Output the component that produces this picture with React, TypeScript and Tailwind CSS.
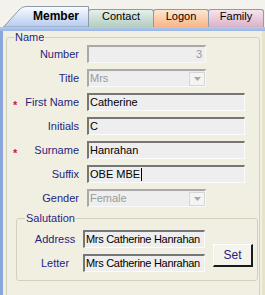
import React from "react";

const navy = "text-[#1f1f7e]";

function Arrow() {
  return (
    <div className="w-[16px] h-[14px] bg-[#f4f4f2] border border-[#d6d6d6] flex items-center justify-center">
      <svg width="7" height="4" viewBox="0 0 7 4">
        <path d="M0 0 L7 0 L3.5 4 Z" fill="#a8a8a8" />
      </svg>
    </div>
  );
}

function TextBox({ children, w = "w-[158px]" }: { children?: React.ReactNode; w?: string }) {
  return (
    <div
      className={`${w} h-[18px] bg-[#eeeeee] border-t-2 border-l-2 border-r border-b border-t-[#767676] border-l-[#767676] border-r-[#fbfbfb] border-b-[#fbfbfb] flex items-center pl-[1px] text-black whitespace-nowrap overflow-hidden`}
    >
      {children}
    </div>
  );
}

function DisabledBox({ children, combo, right }: { children?: React.ReactNode; combo?: boolean; right?: boolean }) {
  return (
    <div
      className={`w-[119px] h-[18px] bg-[#eeeeee] border-t-2 border-l-2 border-r border-b border-t-[#a9a9a9] border-l-[#a9a9a9] border-r-[#f9f9f9] border-b-[#f9f9f9] flex items-center text-[#9b9b9b] ${right ? "justify-end pr-[3px]" : "pl-[1px] justify-between"}`}
    >
      <span>{children}</span>
      {combo && <Arrow />}
    </div>
  );
}

function Row({ label, star, children }: { label: string; star?: boolean; children: React.ReactNode }) {
  return (
    <div className="flex items-center h-[18px] gap-[8px]">
      <div className={`w-[72px] flex items-center ${navy}`}>
        {star && <span className="ml-[6px] text-[#c8203c] text-[11px] font-bold leading-none mt-[6px]">*</span>}
        <span className="ml-auto whitespace-nowrap">{label}</span>
      </div>
      {children}
    </div>
  );
}

function Tab({ w, from, to, children }: { w: string; from: string; to: string; children: React.ReactNode }) {
  return (
    <div
      className={`${w} h-[18px] -ml-px border border-b-0 border-[#8f9aa6] rounded-t-[3px] bg-gradient-to-b ${from} ${to} flex justify-center items-start text-black`}
    >
      {children}
    </div>
  );
}

export default function App() {
  return (
    <div className="w-[265px] h-[295px] overflow-hidden bg-[#f3f2ec] text-[11px] leading-[13px] [font-family:'Liberation_Sans',Arial,sans-serif]">
      {/* Tabs */}
      <div className="h-[27px] flex items-end pl-[3px]">
        <div className="relative w-[86px] h-[21px] flex items-start pt-[3px] pl-[30px] font-bold text-[12px] leading-[14px] text-black">
          <svg className="absolute inset-0" width="86" height="21" viewBox="0 0 86 21">
            <defs>
              <linearGradient id="mt" x1="0" y1="0" x2="0" y2="1">
                <stop offset="0" stopColor="#fbfcfe" />
                <stop offset="1" stopColor="#b4cbef" />
              </linearGradient>
            </defs>
            <path d="M0.5 21 L16 4 Q19 0.5 23 0.5 L85.5 0.5 L85.5 21 Z" fill="url(#mt)" stroke="#8f9aa6" strokeWidth="1" />
          </svg>
          <span className="relative">Member</span>
        </div>
        <Tab w="w-[66px]" from="from-[#e6f0eb]" to="to-[#b3cdc1]">Contact</Tab>
        <Tab w="w-[56px]" from="from-[#fde6d2]" to="to-[#f6b586]">Logon</Tab>
        <Tab w="w-[56px]" from="from-[#f6e4ee]" to="to-[#d9b3c8]">Family</Tab>
      </div>
      <div className="h-[4px] bg-gradient-to-b from-[#b4cbef] to-[#9ab5e3]" />

      {/* Panel */}
      <div className="h-[264px] border-l-[3px] border-l-[#8aa6dc] border-r-[3px] border-r-[#e7e3c8] bg-[#f1efe2] pt-[6px] pl-[3px]">
        <div className="relative w-[254px] h-[270px] border border-[#d3d1bd] rounded-[3px] pt-[7px]">
          <span className="absolute -top-[7px] left-[7px] px-[1px] bg-[#f1efe2] text-[#2a1d86]">Name</span>
          <div className="flex flex-col gap-[6px]">
            <Row label="Number">
              <DisabledBox right>3</DisabledBox>
            </Row>
            <Row label="Title">
              <DisabledBox combo>Mrs</DisabledBox>
            </Row>
            <Row label="First Name" star>
              <TextBox>Catherine</TextBox>
            </Row>
            <Row label="Initials">
              <TextBox>C</TextBox>
            </Row>
            <Row label="Surname" star>
              <TextBox>Hanrahan</TextBox>
            </Row>
            <Row label="Suffix">
              <TextBox>
                OBE MBE<span className="inline-block w-px h-[13px] bg-black ml-[1px]" />
              </TextBox>
            </Row>
            <Row label="Gender">
              <DisabledBox combo>Female</DisabledBox>
            </Row>
          </div>

          {/* Salutation */}
          <div className="relative ml-[9px] mt-[11px] w-[242px] h-[63px] border border-[#d3d1bd] rounded-[3px] pt-[11px] flex items-center">
            <span className="absolute -top-[7px] left-[8px] px-[1px] bg-[#f1efe2] text-[#2a1d86]">Salutation</span>
            <div className="flex flex-col gap-[6px] self-start">
              <div className="flex items-center h-[18px]">
                <span className={`ml-[17px] w-[42px] text-center ${navy}`}>Address</span>
                <div className="ml-[7px]">
                  <TextBox w="w-[122px]">
                    <span className="tracking-[-0.3px]">Mrs Catherine Hanrahan</span>
                  </TextBox>
                </div>
              </div>
              <div className="flex items-center h-[18px]">
                <span className={`ml-[17px] w-[42px] text-center ${navy}`}>Letter</span>
                <div className="ml-[7px]">
                  <TextBox w="w-[122px]">
                    <span className="tracking-[-0.3px]">Mrs Catherine Hanrahan</span>
                  </TextBox>
                </div>
              </div>
            </div>
            <button className="ml-[8px] mt-[1px] w-[40px] h-[23px] bg-[#f4f3ec] border-t border-l border-t-white border-l-white border-r-2 border-b-2 border-r-[#1a1a1a] border-b-[#1a1a1a] text-[12px] text-[#1f1f7e] flex items-center justify-center">
              Set
            </button>
          </div>
        </div>
      </div>
    </div>
  );
}
